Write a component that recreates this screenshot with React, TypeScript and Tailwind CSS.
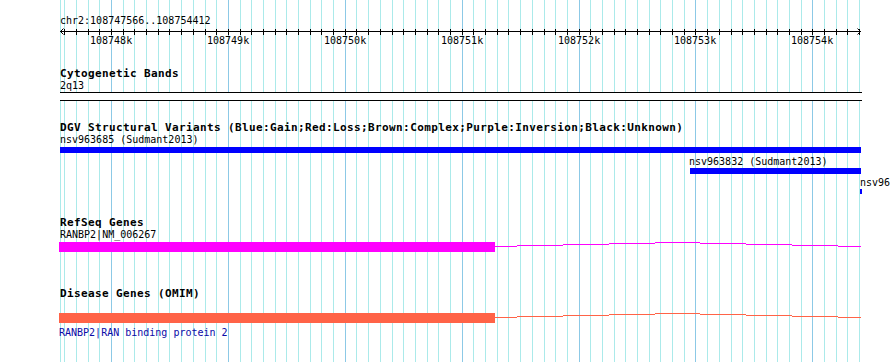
import React from "react";

const BP0 = 108747566;
const X0 = 60.3;
const SCALE = 0.11689;
const px = (bp: number) => Math.round(X0 + (bp - BP0) * SCALE);

const gridBps = Array.from({ length: 69 }, (_, i) => 108747600 + i * 100);
const majorBps = gridBps.filter((bp) => bp % 1000 === 0);

// intron-ish step line: [x1, x2, dy]
const steps: [number, number, number][] = [
  [495, 517, 0],
  [517, 563, -1],
  [563, 609, -2],
  [609, 655, -3],
  [655, 700, -4],
  [700, 746, -3],
  [746, 792, -2],
  [792, 838, -1],
  [838, 861, 0],
];

const mono = { fontFamily: '"DejaVu Sans Mono", "Liberation Mono", monospace' };

function Grid() {
  return (
    <svg className="absolute inset-0" width={890} height={362}>
      <rect x={60} y={0} width={1} height={362} fill="#abeaea" />
      {gridBps.map((bp) => (
        <rect
          key={bp}
          x={px(bp)}
          y={0}
          width={1}
          height={362}
          fill={bp % 1000 === 0 ? "#8cc9e6" : "#abeaea"}
        />
      ))}
    </svg>
  );
}

function Ruler() {
  return (
    <svg className="block" width={890} height={8}>
      <line x1={60} y1={4.5} x2={861} y2={4.5} stroke="#000" strokeWidth={1} />
      <polyline points="63.5,1.5 60.5,4.5 63.5,7.5" fill="none" stroke="#000" strokeWidth={1} />
      <polyline points="857.5,1.5 860.5,4.5 857.5,7.5" fill="none" stroke="#000" strokeWidth={1} />
      {gridBps.map((bp) => (
        <line key={bp} x1={px(bp) + 0.5} y1={2} x2={px(bp) + 0.5} y2={8} stroke="#000" strokeWidth={1} />
      ))}
    </svg>
  );
}

function Title({ children, className = "" }: { children: React.ReactNode; className?: string }) {
  return (
    <div className={`h-[12px] whitespace-nowrap pl-[60px] text-[11px] font-bold leading-[12px] tracking-[0.38px] text-black ${className}`}>
      {children}
    </div>
  );
}

function Label({ x, children, className = "" }: { x: number; children: React.ReactNode; className?: string }) {
  return (
    <div className={`h-[12px] whitespace-nowrap text-[10px] leading-[12px] ${className}`} style={{ paddingLeft: x }}>
      {children}
    </div>
  );
}

function Bar({ x, w, h, color, className = "" }: { x: number; w: number; h: number; color: string; className?: string }) {
  return <div className={className} style={{ marginLeft: x, width: w, height: h, background: color }} />;
}

function GeneModel({ color, className = "" }: { color: string; className?: string }) {
  return (
    <svg className={`block ${className}`} width={890} height={10}>
      <rect x={59} y={0} width={436} height={10} fill={color} />
      {steps.map(([a, b, dy]) => (
        <rect key={a} x={a} y={4 + dy} width={b - a} height={1} fill={color} />
      ))}
    </svg>
  );
}

export default function App() {
  return (
    <div className="relative h-[362px] w-[890px] overflow-hidden bg-white text-black" style={mono}>
      <Grid />
      <div className="relative flex flex-col pt-[15px]">
        <Label x={60}>chr2:108747566..108754412</Label>
        <Ruler />
        <div className="relative h-[11px]">
          {majorBps.map((bp) => (
            <span
              key={bp}
              className="absolute top-0 w-[42px] text-center text-[10px] leading-[11px]"
              style={{ left: px(bp) - 21 }}
            >
              {Math.round(bp / 1000)}k
            </span>
          ))}
        </div>

        <Title className="mt-[22px]">Cytogenetic Bands</Title>
        <Label x={60}>2q13</Label>
        <div className="ml-[60px] h-[9px] w-[802px] border-y border-black bg-white" />

        <Title className="mt-[21px]">DGV Structural Variants (Blue:Gain;Red:Loss;Brown:Complex;Purple:Inversion;Black:Unknown)</Title>
        <Label x={60}>nsv963685 (Sudmant2013)</Label>
        <Bar x={60} w={801} h={6} color="#0000ff" className="mt-[1px]" />
        <Label x={689} className="mt-[3px]">nsv963832 (Sudmant2013)</Label>
        <Bar x={690} w={171} h={6} color="#0000ff" />
        <Label x={860} className="mt-[3px]">nsv963833</Label>
        <Bar x={860} w={2} h={5} color="#0000ff" />

        <Title className="mt-[23px]">RefSeq Genes</Title>
        <Label x={60}>RANBP2|NM_006267</Label>
        <GeneModel color="#ff00ff" className="mt-[1px]" />

        <Title className="mt-[36px]">Disease Genes (OMIM)</Title>
        <GeneModel color="#ff6347" className="mt-[13px]" />
        <Label x={59} className="mt-[4px] text-[#0a0aa8]">RANBP2|RAN binding protein 2</Label>
      </div>
    </div>
  );
}
